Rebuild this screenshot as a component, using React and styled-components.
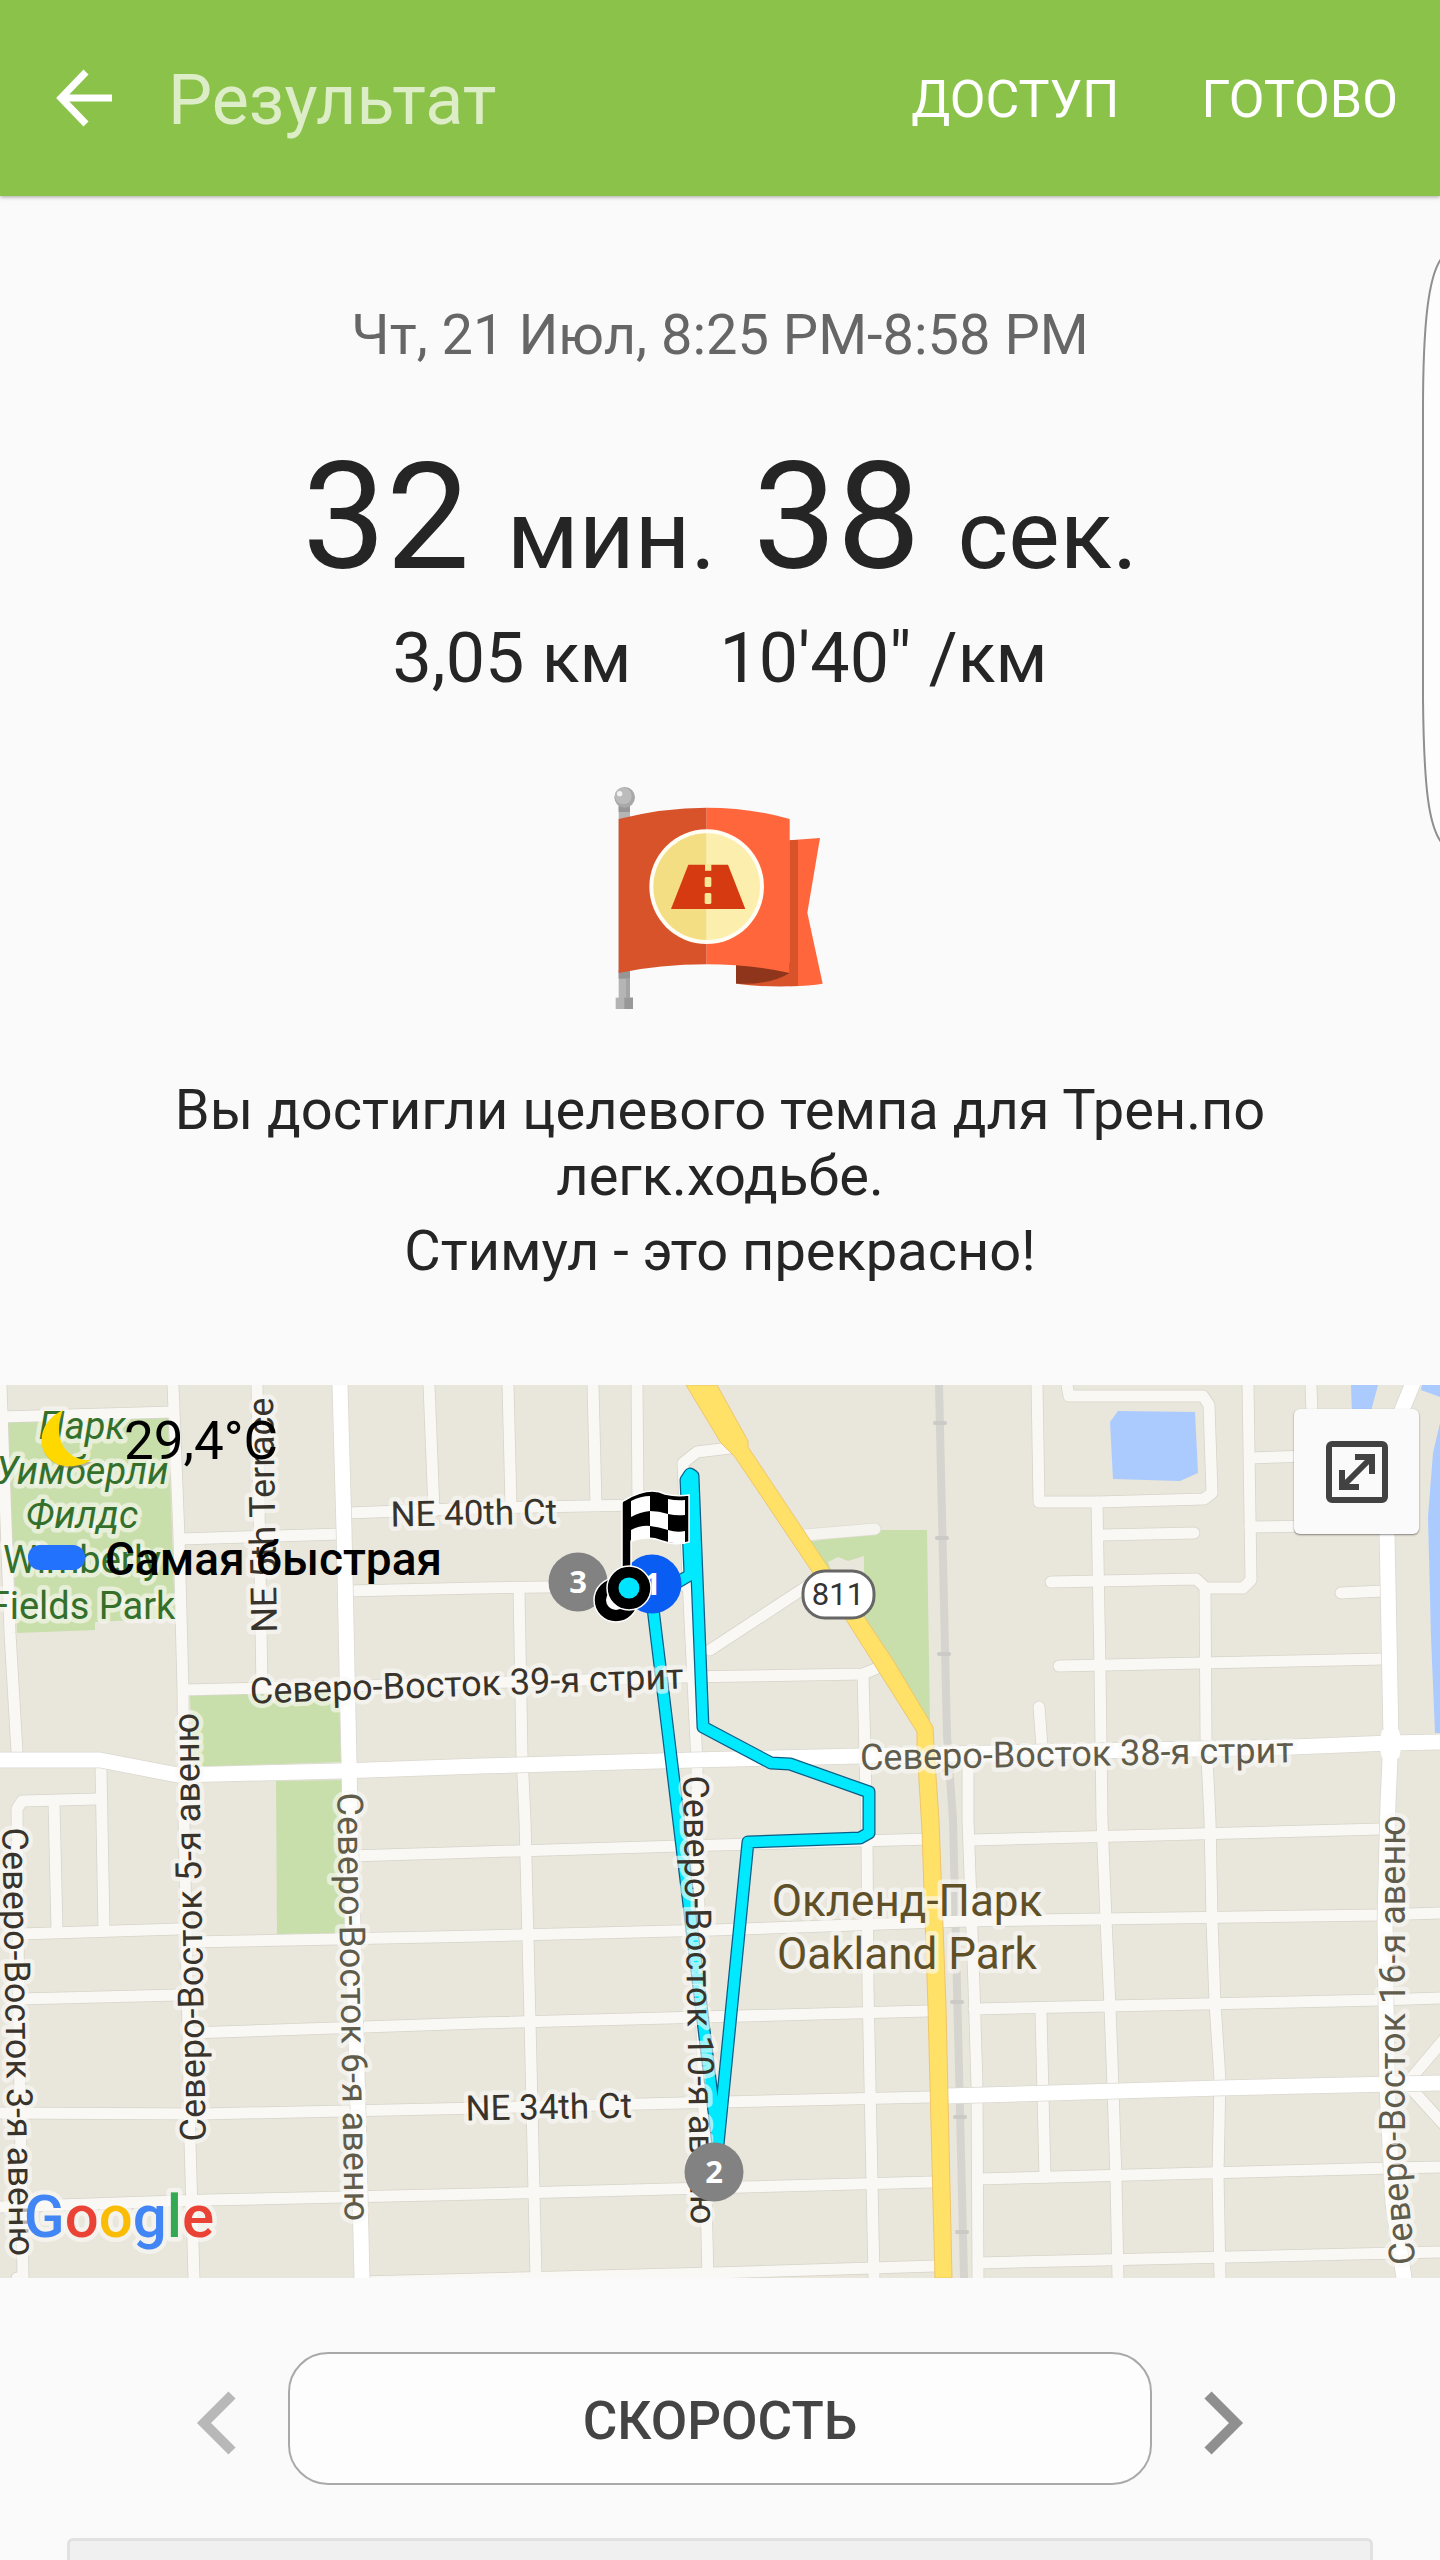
import styled, { createGlobalStyle } from 'styled-components';

const GlobalStyle = createGlobalStyle`
  * { box-sizing: border-box; }
  body {
    margin: 0;
    background: #fafafa;
    color: #252525;
    font-family: Roboto, "Noto Sans", sans-serif;
  }
  button {
    padding: 0;
    border: none;
    background: transparent;
    color: inherit;
    font: inherit;
    cursor: pointer;
  }
  svg { display: block; }
`;

const Page = styled.div`
  position: relative;
  display: flex;
  flex-direction: column;
  min-height: 100vh;
  overflow: hidden;
`;

const AppBar = styled.header`
  display: flex;
  align-items: center;
  height: 196px;
  padding: 4px 42px 0 56px;
  background: #8bc34a;
  color: #fff;
  box-shadow: 0 1px 4px rgba(0, 0, 0, 0.35);
`;

const Title = styled.h1`
  flex: 1;
  margin: 0 0 0 56px;
  font-size: 70px;
  font-weight: 400;
  line-height: 82px;
  color: #dcedc8;
`;

const BarActions = styled.div`
  display: flex;
  gap: 82px;
  font-size: 52px;
  line-height: 66px;
`;

const BackButton = styled.button`
  margin-bottom: 4px;
`;

const EdgeHandle = styled.svg`
  position: absolute;
  top: 240px;
  right: 0;
`;

const Summary = styled.section`
  display: flex;
  flex-direction: column;
  align-items: center;
  padding: 106px 160px 101px;
  text-align: center;
`;

const DateRange = styled.time`
  font-size: 56px;
  line-height: 66px;
  color: #666;
`;

const Duration = styled.p`
  margin: 61px 0 12px;
  font-size: 149px;
  line-height: 176px;

  small {
    font-size: 97px;
    line-height: 1;
  }
`;

const Stats = styled.div`
  display: flex;
  gap: 88px;
  font-size: 70px;
  line-height: 82px;
`;

const Badge = styled.svg`
  margin: 87px 0 68px;
`;

const Message = styled.p`
  margin: 0 0 9px;
  font-size: 56px;
  line-height: 66px;

  &:last-child { margin: 0; }
`;

const MapBox = styled.section`
  position: relative;
  overflow: hidden;
`;

const MapSvg = styled.svg`
  width: 100%;
  height: auto;
`;

const Weather = styled.div`
  position: absolute;
  top: 23px;
  left: 40px;
  display: flex;
  gap: 30px;
  font-size: 53px;
  line-height: 66px;
  color: #000;
`;

const Legend = styled.div`
  position: absolute;
  top: 141px;
  left: 28px;
  display: flex;
  align-items: center;
  gap: 20px;
  font-size: 46px;
  font-weight: 500;
  line-height: 66px;
  color: #000;
`;

const LegendPill = styled.span`
  width: 57px;
  height: 25px;
  margin-bottom: 4px;
  border-radius: 12px;
  background: #2272fd;
`;

const ExpandButton = styled.button`
  position: absolute;
  top: 24px;
  right: 21px;
  display: grid;
  place-items: center;
  width: 125px;
  height: 125px;
  border-radius: 6px;
  background: #fafafa;
  box-shadow: 0 1px 2px rgba(0, 0, 0, 0.45);
`;

const Switcher = styled.nav`
  display: flex;
  align-items: center;
  justify-content: center;
  gap: 52px;
  padding: 74px 0 53px;
`;

const ArrowButton = styled.button`
  padding-top: 8px;
`;

const Metric = styled.button`
  width: 60%;
  height: 133px;
  padding-top: 4px;
  border: 2px solid #a9a9a9;
  border-radius: 40px;
  background: #fdfdfd;
  color: #444;
  font-size: 53px;
  font-weight: 500;
`;

const ChartCard = styled.section`
  flex: 1;
  min-height: 20px;
  margin: 0 67px;
  border: 3px solid #e1e1e1;
  border-bottom: none;
  border-radius: 6px 6px 0 0;
  background: #f0f0f0;
`;

const minorRoads = [
  '1,0 10,248 17,367',
  '17,893 23,893 19,650 17,424 22,416 97,414',
  '101,384 104,545',
  '54,417 57,545',
  '20,549 178,544',
  '20,614 178,610',
  '173,0 179,152 183,305 184,435 190,758 194,893',
  '0,32 172,27',
  '180,154 340,149',
  '184,305 340,301 480,298 683,292 863,289 880,282',
  '257,0 262,303',
  '429,0 434,126',
  '348,128 480,123 638,120',
  '508,0 511,121',
  '593,0 596,120',
  '637,0 638,120',
  '348,206 480,203 690,200',
  '519,204 522,370 525,435 530,635 536,893',
  '738,62 697,67 683,78 686,150 690,235 697,378 697,440 708,893',
  '710,265 812,198',
  '863,289 865,370 867,452 868,602 874,893',
  '350,471 480,467 680,461 930,454',
  '190,557 480,551 713,545 967,536',
  '190,648 480,638 927,626',
  '0,728 203,729 480,723 930,712',
  '0,822 207,815 480,809 932,797',
  '360,897 713,888 935,881',
  '968,370 968,435 974,602 977,702 978,893',
  '1097,117 1100,285 1102,435 1106,535 1110,622 1113,702 1116,795 1118,893',
  '1205,203 1206,352 1210,435 1212,535 1215,618 1220,695 1218,788 1220,893',
  '1041,628 1045,792',
  '973,455 1380,444',
  '967,536 1380,530 1440,528',
  '974,624 1380,615 1440,613',
  '978,794 1393,783 1440,782',
  '978,878 1440,867',
  '1446,652 1408,697',
  '1408,700 1446,742',
  '1037,0 1039,117 1097,117 1204,114 1212,108 1209,20 1203,11 1069,11 1067,0',
  '1103,150 1194,148',
  '1051,197 1196,194 1206,203 1243,203 1251,195 1248,0',
  '1250,73 1310,71',
  '1250,142 1310,141',
  '1311,0 1312,30',
  '1341,208 1383,206',
  '1059,281 1383,274',
  '1039,322 1042,362',
];

const mainRoads = [
  '0,375 100,375 178,390 340,386 480,381 693,375 860,371 1090,366 1293,362 1390,358 1440,357',
  '340,0 344,145 349,375 350,435 358,725 362,893',
  '1413,-2 1400,30 1387,80 1387,148 1391,352 1388,418 1385,535 1387,702 1393,818 1404,893',
  '947,711 1220,703 1440,698',
];

const shortRoad = '805,150 875,144';

const route =
  '652,215 718,760 748,457 860,453 869,448 869,407 790,379 771,378 703,342 693,91 690,89 686,95 690,190 678,197 656,200';

const railTicks = [[940, 38], [942, 153], [944, 269], [948, 385], [953, 501], [957, 617], [960, 732], [962, 847]];

const DARK = '#38332b';
const OLIVE = '#5f5c4c';
const GREEN = '#34702c';

const streetLabels = [
  { text: 'NE 40th Ct', x: 474, y: 140, rotate: -1, fill: DARK, size: 35 },
  { text: 'Северо-Восток 39-я стрит', x: 467, y: 311, rotate: -2, fill: DARK },
  { text: 'Северо-Восток 38-я стрит', x: 1077, y: 381, rotate: -1, fill: OLIVE },
  { text: 'NE 5th Terrace', x: 275, y: 130, rotate: -91, fill: DARK },
  { text: 'Северо-Восток 5-я авеню', x: 202, y: 542, rotate: -91, fill: DARK },
  { text: 'Северо-Восток 6-я авеню', x: 341, y: 622, rotate: 89, fill: OLIVE },
  { text: 'Северо-Восток 3-я авеню', x: 6, y: 657, rotate: 89, fill: DARK },
  { text: 'Северо-Восток 10-я авеню', x: 687, y: 615, rotate: 89, fill: DARK },
  { text: 'NE 34th Ct', x: 549, y: 734, rotate: -1, fill: DARK, size: 35 },
];

const parkLabels = [
  { text: 'Парк', y: 54, italic: true },
  { text: 'Уимберли', y: 99, italic: true },
  { text: 'Филдс', y: 143, italic: true },
  { text: 'Wimberly', y: 188 },
  { text: 'Fields Park', y: 234 },
];

const Label = styled.text`
  font-size: ${(p) => p.$size || 36}px;
  font-style: ${(p) => (p.$italic ? 'italic' : 'normal')};
  paint-order: stroke;
  stroke: rgba(250, 249, 246, 0.65);
  stroke-width: 9px;
  stroke-linejoin: round;
  text-anchor: middle;
`;

const PinText = styled.text`
  font-family: "Open Sans", sans-serif;
  font-size: 31px;
  font-weight: 700;
  fill: #fff;
  text-anchor: middle;
`;

const Roads = ({ lines, width, color, edge }) => (
  <g fill="none" strokeLinejoin="round" strokeLinecap="round">
    {lines.map((pts) => (
      <polyline key={`edge-${pts}`} points={pts} stroke={edge} strokeWidth={width + 1.5} />
    ))}
    {lines.map((pts) => (
      <polyline key={pts} points={pts} stroke={color} strokeWidth={width} />
    ))}
  </g>
);

const Pin = ({ x, y, color, children }) => (
  <g>
    <circle cx={x} cy={y} r="29.5" fill={color} />
    <PinText x={x} y={y + 11}>{children}</PinText>
  </g>
);

const FinishFlag = () => (
  <g>
    <circle cx="616" cy="215" r="22" fill="#000" stroke="#fff" strokeWidth="1.5" />
    <circle cx="616" cy="215" r="10" fill="#fff" />
    <path
      d="M622 182V118q0-2 3-3q24-14 40-6q12 3 24 1V157q-14 4-27-1q-14-6-31 0V182z"
      fill="#000"
      stroke="#fff"
      strokeWidth="1.5"
    />
    <g fill="#fff">
      <path d="M631 116q10-5 19-5v15q-10 1-19 6z" />
      <path d="M668 114q9 2 17 1v15q-8 1-17-1z" />
      <path d="M650 126q9 0 18 3v16q-9-3-18-4z" />
      <path d="M631 145q10-5 19-4v12q-10 0-19 4z" />
      <path d="M668 145q9 3 17 1v13q-8 0-17-2z" />
    </g>
    <circle cx="629" cy="203" r="22" fill="#000" stroke="#fff" strokeWidth="1.5" />
    <circle cx="629" cy="203" r="10.5" fill="#00e5ff" />
  </g>
);

const RouteMap = () => (
  <MapSvg viewBox="0 0 1440 893" role="img" aria-label="Oakland Park">
    <defs>
      <path id="ave16" d="M1417 887Q1405 800 1405 740V422" />
    </defs>
    <rect width="1440" height="893" fill="#e9e6dc" />

    <g fill="#c9dfab">
      <path d="M7 37L168 33 175 233 95 237V245L17 248z" />
      <path d="M190 311L339 305 341 377 193 382z" />
      <path d="M276 396L345 395 350 548 277 549z" />
      <path d="M808 157L880 145H927L930 340z" />
    </g>
    <path d="M828 177L838 172 848 176 864 171V188H832z" fill="#e9e6dc" />
    <g fill="#abcbff">
      <path d="M1110 37L1118 26 1195 27 1198 88 1180 96 1113 94z" />
      <path d="M1351 0H1378L1370 30H1352z" />
      <path d="M1422 0H1440V12L1421 5z" />
      <path d="M1440 38L1433 68 1428 132 1431 252 1435 348H1440z" />
    </g>

    <polyline points="939,0 947,350 953,435 964,893" fill="none" stroke="#d6d4ce" strokeWidth="8" />
    {railTicks.map(([x, y]) => (
      <rect key={y} x={x - 7} y={y - 2} width="14" height="4" rx="2" fill="#cbcac7" />
    ))}

    <Roads lines={minorRoads} width={11} color="#faf8f4" edge="#d6d4ca" />
    <Roads lines={[shortRoad]} width={11} color="#f6f4ef" edge="#dedcd4" />
    <Roads lines={mainRoads} width={15} color="#fff" edge="#dad8d0" />
    <path d="M1382 345h17l3 14-3 14h-17l-3-14z" fill="#fff" />

    <path
      d="M686 0L721 58 735 72 813 188 845 233 917 347V362L922 445 928 622 935 893H952L946 622 939 435 934 362 933 342 893 275 865 233 830 185 748 62V56L717 0z"
      fill="#ffe168"
      stroke="#eec56a"
      strokeWidth="1"
    />

    <g fill="none" strokeLinejoin="round">
      <polyline points={route} stroke="#0b5d86" strokeWidth="13" />
      <polyline points={route} stroke="#00e9ff" strokeWidth="10.5" />
    </g>

    {streetLabels.map(({ text, x, y, rotate, fill, size }) => (
      <Label key={text} transform={`translate(${x} ${y}) rotate(${rotate})`} fill={fill} $size={size}>
        {text}
      </Label>
    ))}
    <Label fill={OLIVE}>
      <textPath href="#ave16" startOffset="50%">Северо-Восток 16-я авеню</textPath>
    </Label>
    {parkLabels.map(({ text, y, italic }) => (
      <Label key={text} x="82" y={y} $size={38} $italic={italic} fill={GREEN}>{text}</Label>
    ))}
    <Label x="907" y="531" $size={44} fill="#5f5028">Окленд-Парк</Label>
    <Label x="907" y="584" $size={44} fill="#5f5028">Oakland Park</Label>

    <rect x="803" y="186" width="71" height="47" rx="22" fill="#fff" stroke="#666" strokeWidth="3" />
    <text x="838" y="220" fontSize="31" textAnchor="middle" fill="#333">811</text>

    <Pin x={578} y={197} color="#828282">3</Pin>
    <Pin x={652} y={199} color="#0a5df2">1</Pin>
    <Pin x={714} y={787} color="#828282">2</Pin>
    <FinishFlag />

    <Label x="119" y="852" $size={60} fill="#4285f4" fontWeight="500">
      G<tspan fill="#ea4335">o</tspan><tspan fill="#fbbc05">o</tspan>g
      <tspan fill="#34a853">l</tspan><tspan fill="#ea4335">e</tspan>
    </Label>
  </MapSvg>
);

const FlagBadge = () => (
  <Badge width="216" height="223" viewBox="96 78 648 669" aria-hidden="true">
    <rect x="116" y="130" width="34" height="590" fill="#b5b5b5" />
    <rect x="116" y="138" width="34" height="18" fill="#969696" />
    <rect x="116" y="630" width="34" height="26" fill="#969696" />
    <rect x="138" y="656" width="12" height="58" fill="#a4a4a4" />
    <rect x="107" y="713" width="52" height="34" fill="#b3b3b3" />
    <rect x="133" y="713" width="26" height="34" fill="#989898" />
    <circle cx="134" cy="112" r="31" fill="#a8a8a8" />
    <circle cx="130" cy="108" r="25" fill="#bcbcbc" />
    <circle cx="119" cy="101" r="8" fill="#f2f2f2" />
    <path d="M628 241L720 234 682 458 728 671Q690 677 628 679z" fill="#ff663c" />
    <path d="M628 241L654 240V678Q560 683 468 671L628 638z" fill="#d8522a" />
    <path d="M468 610H630V638Q570 676 468 671z" fill="#8e351b" />
    <path d="M116 177Q250 143 380 143V613Q240 613 116 639z" fill="#d8522a" />
    <path d="M380 143Q510 143 629 177V639Q510 613 380 613z" fill="#ff663c" />
    <circle cx="380" cy="380" r="172" fill="#fffdf4" />
    <path d="M380 220a160 160 0 0 0 0 320z" fill="#f3de83" />
    <path d="M380 220a160 160 0 0 1 0 320z" fill="#fcefad" />
    <path d="M325 314H444L496 447H273z" fill="#d63a11" />
    <path d="M375 312h19v20h-19zM377 351h14l3 3v24l-3 3h-14l-3-3v-24zM377 399h14l3 3v27l-3 3h-14l-3-3v-27z" fill="#f9e798" />
  </Badge>
);

const BackIcon = () => (
  <svg width="56" height="58" viewBox="0 0 56 58" fill="none" stroke="#fff" strokeWidth="7">
    <path d="M30 3L5 29 30 55M5 29H56" />
  </svg>
);

const MoonIcon = () => (
  <svg width="54" height="62" viewBox="0 0 54 62">
    <path d="M24 4C-2 16-6 46 18 57 30 63 44 60 52 54 24 56 12 30 24 4z" fill="#8a8365" opacity="0.5" />
    <path d="M23 2C-3 14-6 45 17 56 30 61 43 57 51 52 24 53 12 28 23 2z" fill="#ffd800" />
  </svg>
);

const ExpandIcon = () => (
  <svg width="62" height="62" viewBox="0 0 62 62" fill="none" stroke="#424242" strokeWidth="6">
    <rect x="3" y="3" width="56" height="56" rx="3" />
    <path d="M16 46L46 16M29 16H46V33M16 29V46H33" />
  </svg>
);

const Chevron = ({ color, flip }) => (
  <svg width="40" height="64" viewBox="0 0 40 64" fill="none" stroke={color} strokeWidth="10">
    <path d={flip ? 'M4 4L32 32 4 60' : 'M36 4L8 32 36 60'} />
  </svg>
);

const App = () => (
  <>
    <GlobalStyle />
    <Page>
      <AppBar>
        <BackButton type="button" aria-label="Назад"><BackIcon /></BackButton>
        <Title>Результат</Title>
        <BarActions>
          <button type="button">ДОСТУП</button>
          <button type="button">ГОТОВО</button>
        </BarActions>
      </AppBar>

      <Summary>
        <DateRange>Чт, 21 Июл, 8:25 PM-8:58 PM</DateRange>
        <Duration>
          32 <small>мин.</small> 38 <small>сек.</small>
        </Duration>
        <Stats>
          <span>3,05 км</span>
          <span>10'40" /км</span>
        </Stats>
        <FlagBadge />
        <Message>Вы достигли целевого темпа для Трен.по легк.ходьбе.</Message>
        <Message>Стимул - это прекрасно!</Message>
      </Summary>

      <MapBox>
        <RouteMap />
        <Weather>
          <MoonIcon />
          <span>29,4°C</span>
        </Weather>
        <Legend>
          <LegendPill />
          <span>Самая быстрая</span>
        </Legend>
        <ExpandButton type="button" aria-label="Развернуть карту"><ExpandIcon /></ExpandButton>
      </MapBox>

      <Switcher>
        <ArrowButton type="button" aria-label="Предыдущий график"><Chevron color="#b8b8b8" /></ArrowButton>
        <Metric type="button">СКОРОСТЬ</Metric>
        <ArrowButton type="button" aria-label="Следующий график"><Chevron color="#8f8f8f" flip /></ArrowButton>
      </Switcher>

      <ChartCard />

      <EdgeHandle width="20" height="620" viewBox="0 0 20 620" aria-hidden="true">
        <path
          d="M21 19C9 36 3 80 3 170V460C4 550 9 585 21 602"
          fill="#fdfdfd"
          stroke="#8f8f8f"
          strokeWidth="2"
        />
      </EdgeHandle>
    </Page>
  </>
);

export default App;
